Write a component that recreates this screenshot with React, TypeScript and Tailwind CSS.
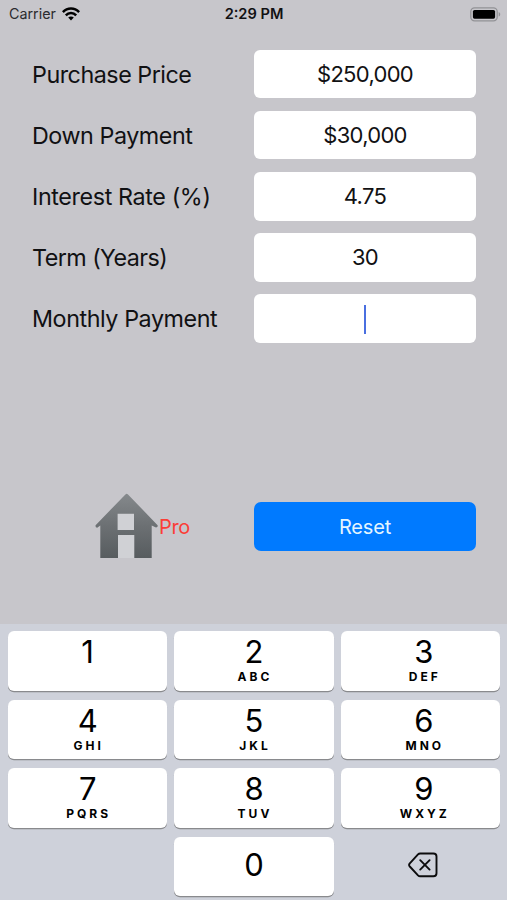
const FIELDS = [
  { label: "Purchase Price", value: "$250,000", tracking: "tracking-[-0.48px]" },
  { label: "Down Payment", value: "$30,000", tracking: "tracking-[-0.45px]" },
  { label: "Interest Rate (%)", value: "4.75", tracking: "tracking-[-0.37px]" },
  { label: "Term (Years)", value: "30", tracking: "tracking-[-0.55px]" },
  { label: "Monthly Payment", value: "", tracking: "tracking-[-0.43px]" },
];

const KEYS = [
  { digit: "1", letters: "" },
  { digit: "2", letters: "ABC" },
  { digit: "3", letters: "DEF" },
  { digit: "4", letters: "GHI" },
  { digit: "5", letters: "JKL" },
  { digit: "6", letters: "MNO" },
  { digit: "7", letters: "PQRS" },
  { digit: "8", letters: "TUV" },
  { digit: "9", letters: "WXYZ" },
];

function WifiIcon() {
  return (
    <svg width="18" height="14" viewBox="0 0 18 14" fill="none" stroke="#000" strokeWidth="2.5">
      <path d="M0.9 5.1C5.4 0.3 12.6 0.3 17.1 5.1" />
      <path d="M3.8 8.3C6.7 5.3 11.3 5.3 14.2 8.3" />
      <path d="M9 13.4L6.2 10.6C7.8 9.1 10.2 9.1 11.8 10.6Z" fill="#000" stroke="none" />
    </svg>
  );
}

function BatteryIcon() {
  return (
    <svg width="31" height="15" viewBox="0 0 31 15" fill="none">
      <rect x="0.8" y="0.8" width="26.4" height="13" rx="3.8" stroke="#929296" strokeWidth="1.3" />
      <rect x="2.9" y="2.9" width="22.2" height="8.8" rx="1.6" fill="#000" />
      <path d="M28.7 5C30.7 5.8 30.7 8.8 28.7 9.6Z" fill="#929296" />
    </svg>
  );
}

function HouseLogo() {
  return (
    <svg width="64" height="66" viewBox="0 0 64 66">
      <defs>
        <linearGradient id="house" x1="0" y1="0" x2="0" y2="1">
          <stop offset="0" stopColor="#85898c" />
          <stop offset="0.5" stopColor="#6c7073" />
          <stop offset="1" stopColor="#575c5f" />
        </linearGradient>
      </defs>
      <path d="M22.5 20.5h17v17h-17zM22.5 42h17v23h-17z" fill="#d0d1d5" />
      <path
        fillRule="evenodd"
        fill="url(#house)"
        d="M30.4 1.4Q31.7 0.2 33 1.4L62.6 32.2Q63.2 34.4 61 34.6L56.7 32.5V65H39.3V42H23V65H5.3V32.5L2.2 34.8Q0 34.4 0.6 32.2ZM22.6 20.8V37H39V20.8Z"
      />
    </svg>
  );
}

function DeleteIcon() {
  return (
    <svg
      width="30"
      height="26"
      viewBox="0 0 30 26"
      fill="none"
      stroke="#0c0c0d"
      strokeWidth="1.9"
      strokeLinecap="round"
      strokeLinejoin="round"
    >
      <path d="M12.2 1.5H25.4Q28.5 1.5 28.5 4.6V21.2Q28.5 24.3 25.4 24.3H12.2Q10.9 24.3 10 23.4L1.8 14.5Q0.4 12.9 1.8 11.3L10 2.4Q10.9 1.5 12.2 1.5Z" />
      <path d="M12.2 8.2L21.6 17.6M21.6 8.2L12.2 17.6" />
    </svg>
  );
}

function Key({ digit, letters }: { digit: string; letters: string }) {
  return (
    <button className="flex h-[59.7px] flex-col items-center rounded-[6px] bg-white pt-[5px] text-black shadow-[0_1.3px_0_#898a8d] nth-[3n]:pl-[7px]">
      <span className="text-[31px] leading-8">{digit}</span>
      <span className="mt-px pl-[2px] text-[12px] leading-4 font-bold tracking-[3px]">{letters}</span>
    </button>
  );
}

export default function App() {
  return (
    <div className="flex h-[900px] w-[507px] flex-col overflow-hidden bg-[#c7c6cb] font-['Inter',sans-serif] text-[#111113]">
      {/* Status bar */}
      <header className="grid h-[28px] grid-cols-3 items-center pr-[6px] pl-[9px]">
        <div className="flex items-center gap-[6px] text-[14.3px] text-[#2b2b2e]">
          Carrier
          <WifiIcon />
        </div>
        <div className="-ml-[2px] pt-[2px] text-center text-[14.6px] font-semibold">2:29 PM</div>
        <div className="flex justify-end">
          <BatteryIcon />
        </div>
      </header>

      {/* Loan form */}
      <main className="flex h-[596px] flex-col pt-[22px] pr-[31px] pl-8">
        <div className="flex flex-col gap-[12.7px]">
          {FIELDS.map(({ label, value, tracking }) => (
            <div key={label} className="flex h-[48.4px] items-center justify-between">
              <span className={`pt-[2px] text-[23.3px] whitespace-nowrap ${tracking}`}>{label}</span>
              <div className="flex h-full w-[222px] items-center justify-center rounded-[6px] bg-white pt-px text-[22px] tracking-[-0.7px]">
                {value || <span className="h-[29px] w-[2.6px] bg-[#4a6fe0]" />}
              </div>
            </div>
          ))}
        </div>

        <div className="mt-[150.5px] flex items-start justify-between">
          <div className="flex items-center pl-[63px]">
            <HouseLogo />
            <span className="pt-px text-[20px] tracking-[-0.3px] text-[#fb3e37]">Pro</span>
          </div>
          <button className="mt-[9px] h-[49px] w-[222px] rounded-[7px] bg-[#007aff] pt-px text-[20px] tracking-[-0.15px] text-[#e4f5ff]">
            Reset
          </button>
        </div>
      </main>

      {/* Number pad */}
      <section className="grow bg-[#ced1da] pt-[7.2px] pr-[7px] pl-2">
        <div className="grid grid-cols-3 gap-x-[7px] gap-y-[8.8px]">
          {KEYS.map((key) => (
            <Key key={key.digit} {...key} />
          ))}
          <button className="col-start-2 flex h-[59.7px] items-center justify-center rounded-[6px] bg-white pb-[3px] text-[31px] text-black shadow-[0_1.3px_0_#898a8d]">
            0
          </button>
          <button aria-label="Delete" className="flex items-center justify-center pb-[3px] pl-[6px]">
            <DeleteIcon />
          </button>
        </div>
      </section>
    </div>
  );
}
